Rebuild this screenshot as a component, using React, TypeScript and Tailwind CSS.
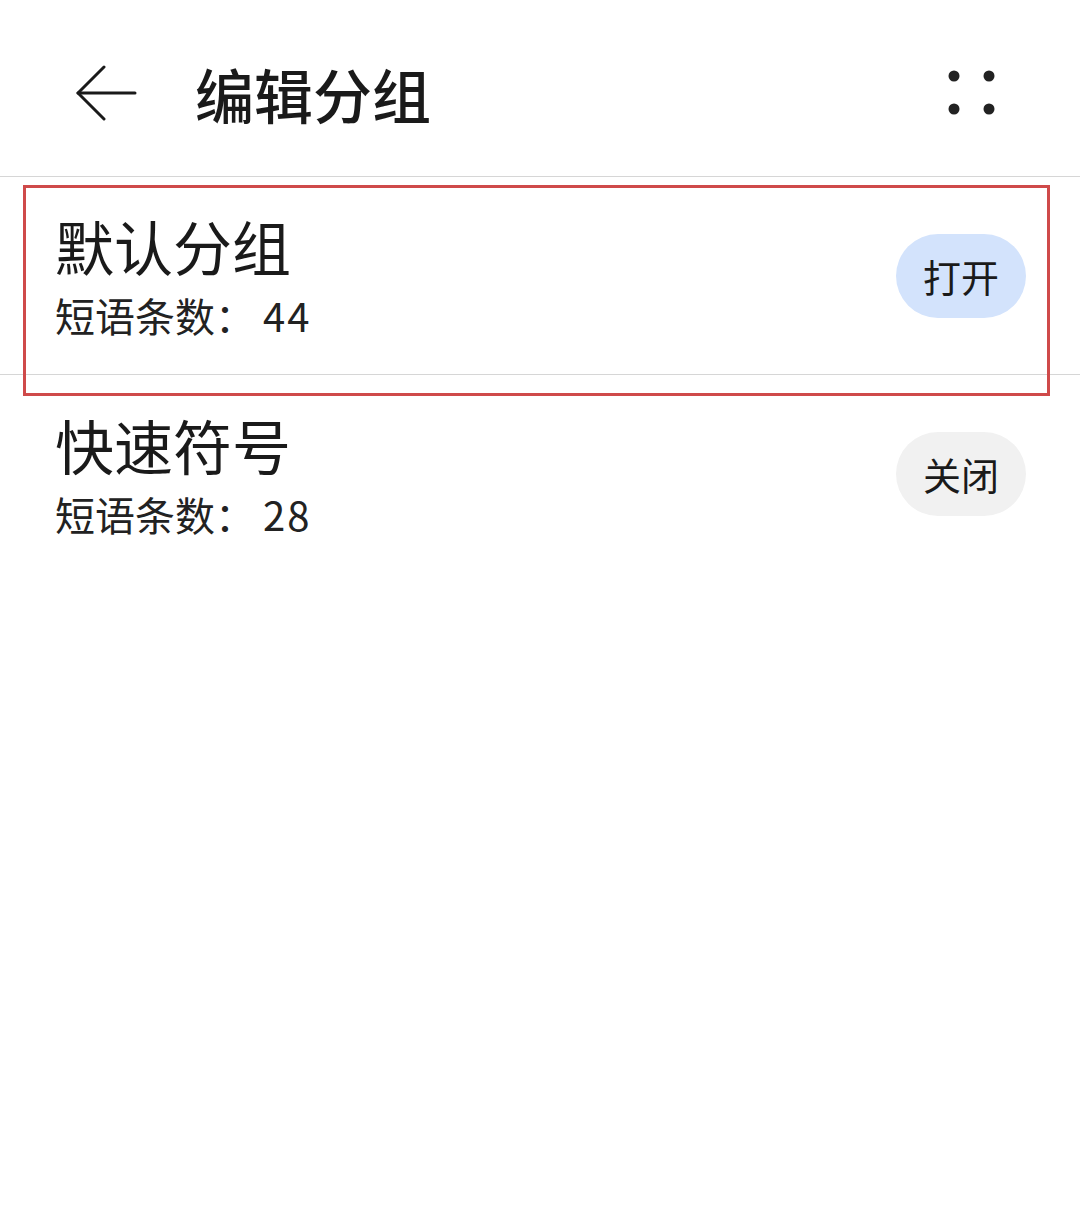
import React from 'react';

type Group = {
  id: number;
  name: string;
  count: number;
  enabled: boolean;
};

const GROUPS: Group[] = [
  { id: 1, name: '默认分组', count: 44, enabled: true },
  { id: 2, name: '快速符号', count: 28, enabled: false },
];

const FONT = "font-['Noto_Sans_CJK_SC','Noto_Sans',sans-serif]";

const BackArrow = () => (
  <svg width="62" height="56" viewBox="0 0 62 56" fill="none" stroke="#1a1a1a" strokeWidth={3} strokeLinecap="round" strokeLinejoin="round">
    <path d="M2 28h57" />
    <path d="M28 2L2 28l26 26" />
  </svg>
);

const GridDots = () => (
  <svg width="48" height="46" viewBox="0 0 48 46" fill="#222">
    <circle cx="6" cy="6" r="5.5" />
    <circle cx="41" cy="6" r="5.5" />
    <circle cx="6" cy="39" r="5.5" />
    <circle cx="41" cy="39" r="5.5" />
  </svg>
);

const GroupRow: React.FC<{ group: Group; last?: boolean }> = ({ group, last }) => (
  <div className={`flex items-center justify-between h-[198px] pl-[55px] pr-[54px] ${last ? '' : 'border-b border-[#d6d6d6]'}`}>
    <div className="flex flex-col">
      <div className="text-[59px] leading-none text-[#1a1a1a]">{group.name}</div>
      <div className="mt-[20px] text-[40px] leading-none text-[#222]">
        短语条数：<span className="ml-[8px] tracking-[2px]">{group.count}</span>
      </div>
    </div>
    <button
      className={`w-[130px] h-[84px] rounded-full text-[38px] leading-none text-[#1a1a1a] ${group.enabled ? 'bg-[#d3e3fc]' : 'bg-[#f1f1f1]'}`}
    >
      {group.enabled ? '打开' : '关闭'}
    </button>
  </div>
);

export default function App() {
  return (
    <div className={`relative w-[1080px] h-[1224px] bg-white ${FONT}`}>
      <header className="flex items-center h-[177px] pt-[10px] border-b border-[#d6d6d6]">
        <div className="ml-[76px] flex items-center">
          <BackArrow />
        </div>
        <h1 className="ml-[57px] text-[59px] font-medium leading-none text-[#1a1a1a]">编辑分组</h1>
        <div className="ml-auto mr-[84px] flex items-center">
          <GridDots />
        </div>
      </header>

      <div className="flex flex-col">
        {GROUPS.map((g, i) => (
          <GroupRow key={g.id} group={g} last={i === GROUPS.length - 1} />
        ))}
      </div>

      {/* highlight frame around the first group */}
      <div className="absolute left-[23px] top-[185px] w-[1027px] h-[211px] border-[3px] border-[#cf4a4a] pointer-events-none" />
    </div>
  );
}
